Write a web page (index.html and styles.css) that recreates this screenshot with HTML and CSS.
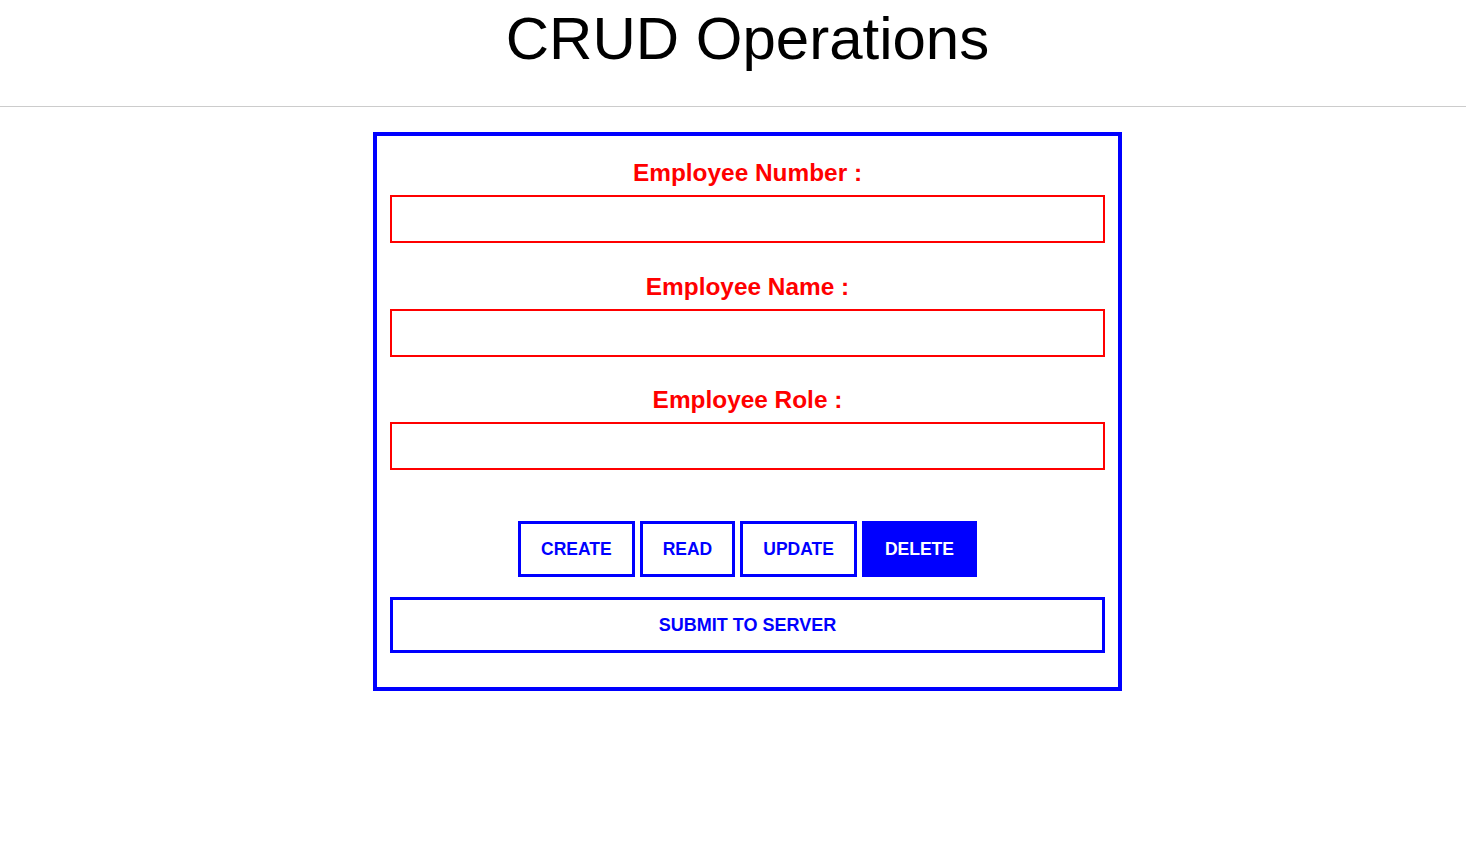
FILE: index.html
```html
<!DOCTYPE html>
<html lang="en">
<head>
<meta charset="utf-8">
<title>CRUD Operations</title>
<link rel="stylesheet" href="styles.css">
</head>
<body>
<header class="page-header">
  <h1 class="page-title">CRUD Operations</h1>
</header>
<main class="page-main">
  <form class="crud-form" onsubmit="return false;">
    <div class="fields">
      <div class="field">
        <label class="field-label" for="empNo">Employee Number :</label>
        <input class="field-input" id="empNo" type="text">
      </div>
      <div class="field">
        <label class="field-label" for="empName">Employee Name :</label>
        <input class="field-input" id="empName" type="text">
      </div>
      <div class="field">
        <label class="field-label" for="empRole">Employee Role :</label>
        <input class="field-input" id="empRole" type="text">
      </div>
    </div>
    <div class="actions">
      <button class="op-btn" type="button">CREATE</button>
      <button class="op-btn" type="button">READ</button>
      <button class="op-btn" type="button">UPDATE</button>
      <button class="op-btn op-btn--active" type="button">DELETE</button>
    </div>
    <button class="submit-btn" type="submit">SUBMIT TO SERVER</button>
  </form>
</main>
</body>
</html>
```

FILE: styles.css
```css
html, body {
  margin: 0;
  padding: 0;
  background: #ffffff;
}

body {
  font-family: "Liberation Sans", Arial, sans-serif;
  color: #000;
}

.page-header {
  padding: 4px 0 33px 29px;
  border-bottom: 1px solid #cccccc;
  text-align: center;
}

.page-title {
  margin: 0;
  font-size: 60px;
  line-height: 69px;
  font-weight: normal;
  color: #000;
}

.page-main {
  display: flex;
  justify-content: center;
  padding: 25px 0 0 29px;
}

.crud-form {
  box-sizing: border-box;
  width: 749px;
  border: 4px solid #0000ff;
  padding: 22px 13px 34px;
  display: flex;
  flex-direction: column;
}

.fields {
  display: flex;
  flex-direction: column;
  gap: 29px;
}

.field {
  display: flex;
  flex-direction: column;
  gap: 9px;
}

.field:last-child {
  margin-top: -1px;
}

.field-label {
  text-align: center;
  color: #ff0000;
  font-weight: bold;
  font-size: 24.4px;
  line-height: 28px;
  padding-top: 1px;
  margin-bottom: -1px;
}

.field-input {
  box-sizing: border-box;
  width: 100%;
  height: 48px;
  margin: 0;
  border: 2px solid #ff0000;
  outline: none;
  background: #fff;
  padding: 0 8px;
  font-family: inherit;
  font-size: 16px;
}

.actions {
  display: flex;
  justify-content: center;
  gap: 5px;
  margin-top: 51px;
}

.op-btn {
  box-sizing: border-box;
  height: 56px;
  padding: 0 20px;
  border: 3px solid #0000ff;
  background: #ffffff;
  color: #0000ff;
  font-family: inherit;
  font-weight: bold;
  font-size: 17.5px;
  cursor: pointer;
}

.op-btn--active {
  background: #0000ff;
  color: #ffffff;
}

.submit-btn {
  box-sizing: border-box;
  width: 100%;
  height: 56px;
  margin-top: 20px;
  border: 3px solid #0000ff;
  background: #ffffff;
  color: #0000ff;
  font-family: inherit;
  font-weight: bold;
  font-size: 18px;
  cursor: pointer;
}
```
